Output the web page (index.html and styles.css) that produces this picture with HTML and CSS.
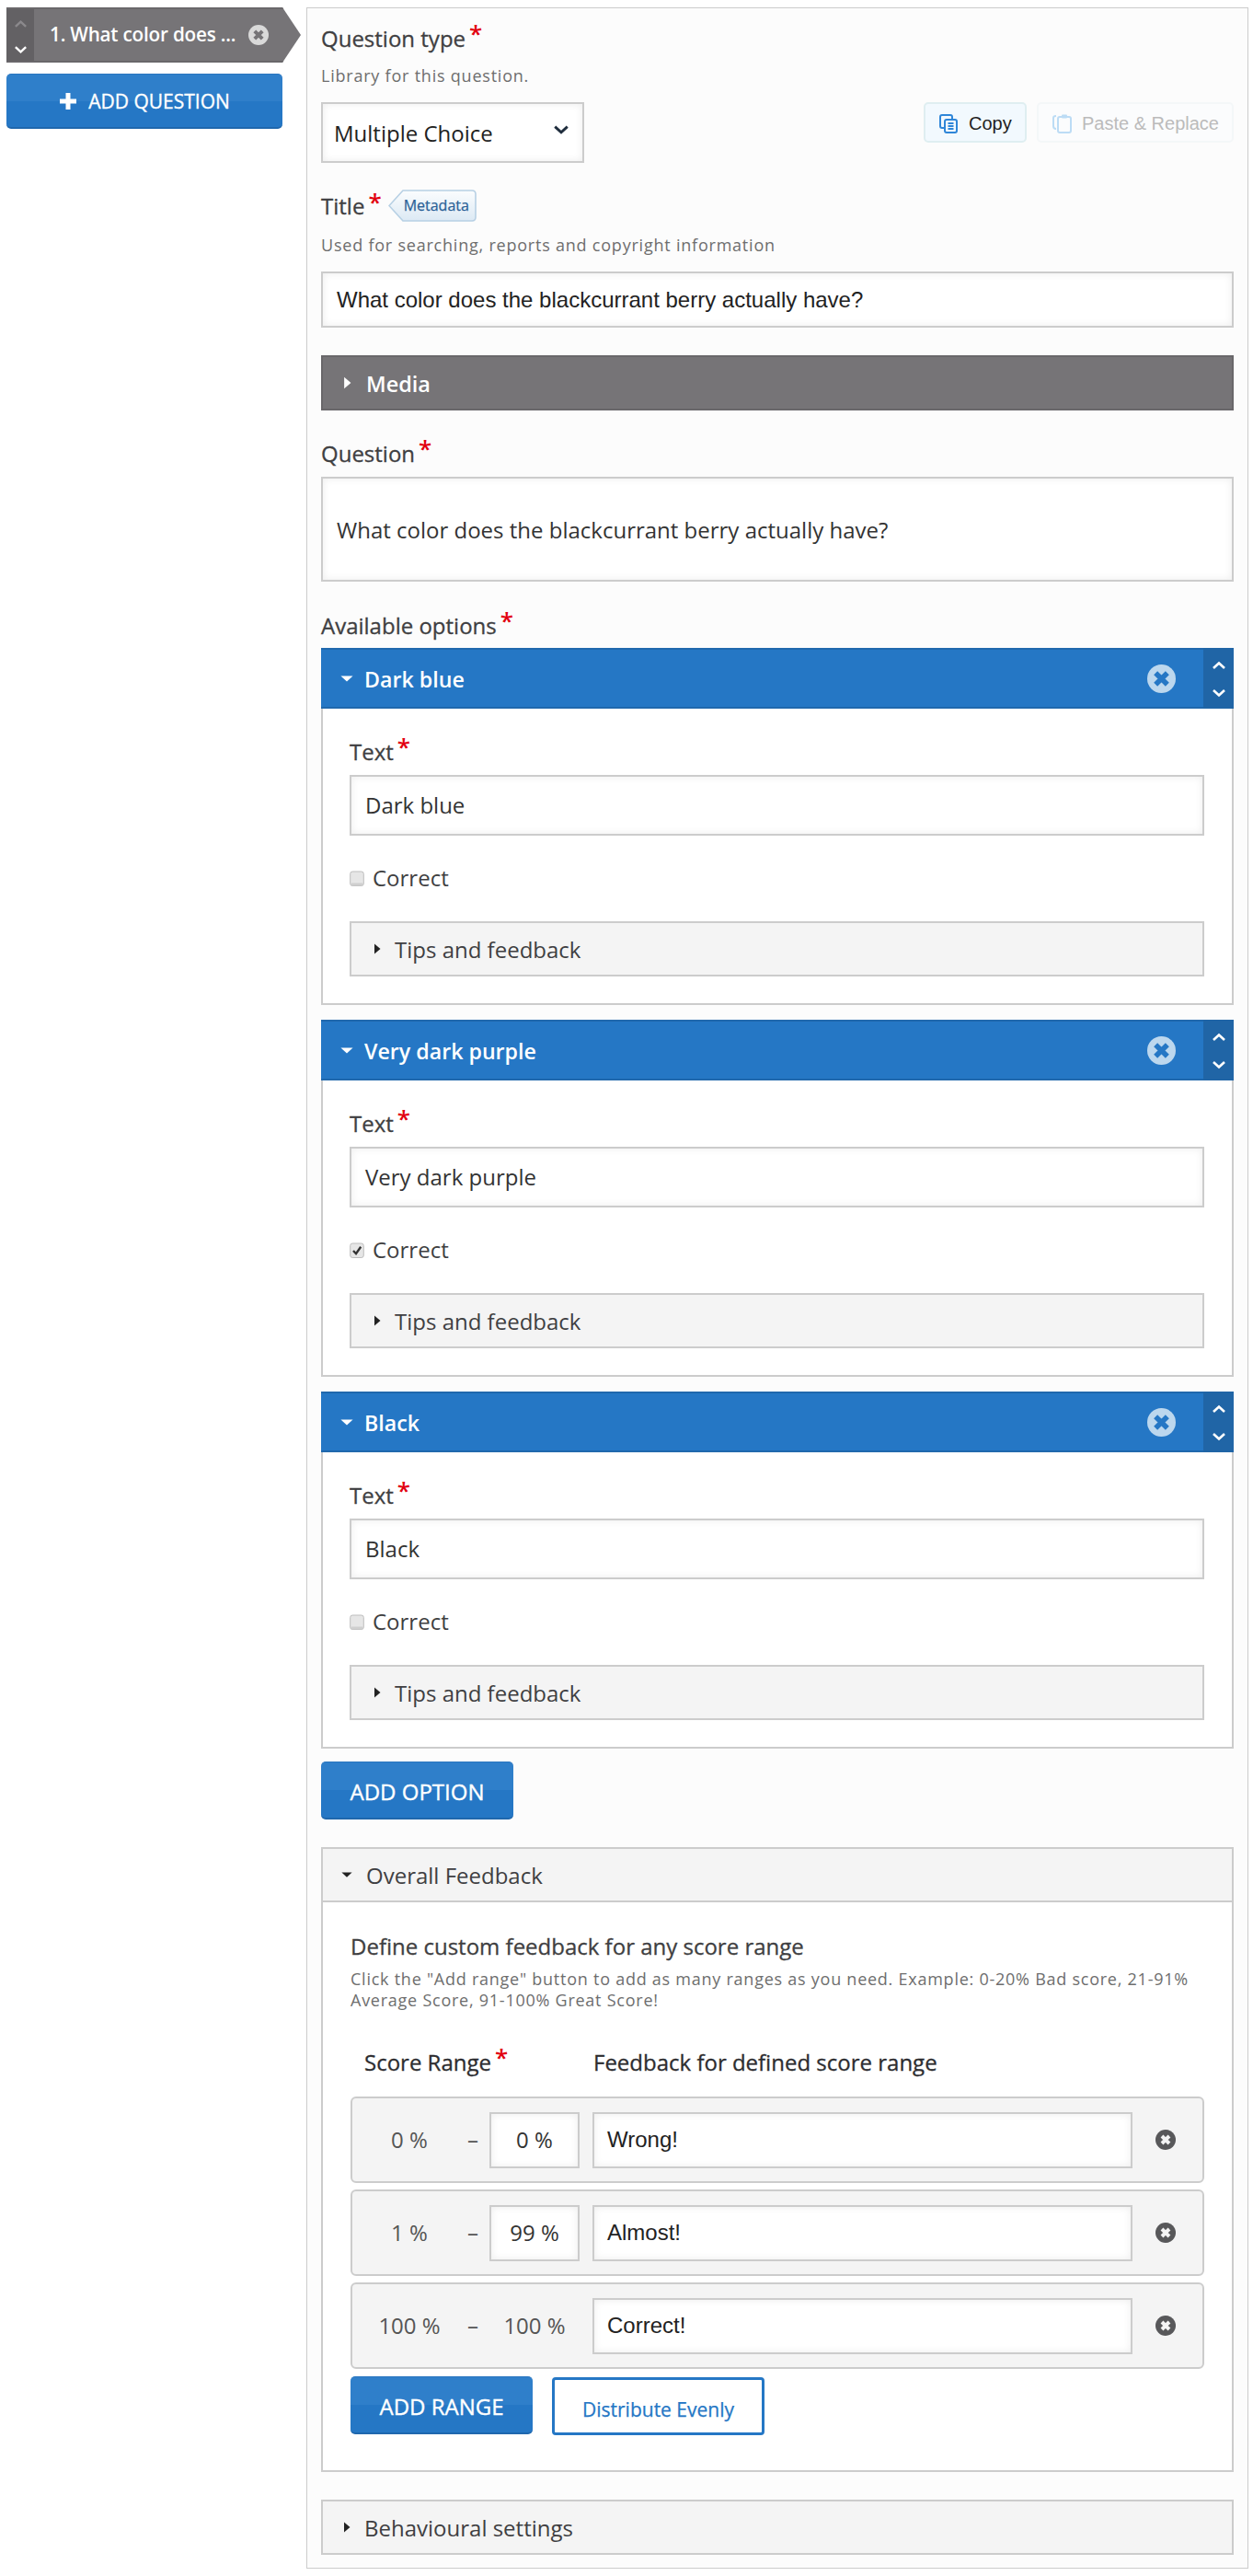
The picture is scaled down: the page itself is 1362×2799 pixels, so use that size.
FILE: index.html
```html
<!DOCTYPE html>
<html lang="en">
<head>
<meta charset="utf-8">
<title>Multiple Choice editor</title>
<link rel="stylesheet" href="styles.css">
</head>
<body>
<svg class="defs" width="0" height="0" aria-hidden="true">
  <symbol id="up" viewBox="0 0 16 10"><path d="M2 8 L8 2.5 L14 8" fill="none" stroke="currentColor" stroke-width="2.6"/></symbol>
  <symbol id="down" viewBox="0 0 16 10"><path d="M2 2 L8 7.5 L14 2" fill="none" stroke="currentColor" stroke-width="2.6"/></symbol>
  <symbol id="right" viewBox="0 0 8 12"><path d="M1 0.5 L7.5 6 L1 11.5 Z" fill="currentColor"/></symbol>
  <symbol id="caret" viewBox="0 0 16 8"><path d="M0.5 0.5 H15.5 L8 7.5 Z" fill="currentColor"/></symbol>
  <symbol id="check" viewBox="0 0 16 18"><rect x="0.7" y="1" width="14.6" height="15.5" rx="2.5" fill="#e6e6e6" stroke="#bdbdbd"/><rect x="1.5" y="13.5" width="13" height="3" rx="1" fill="#cfcfcf"/></symbol>
  <symbol id="checked" viewBox="0 0 16 18"><rect x="0.7" y="1" width="14.6" height="15.5" rx="2.5" fill="#e6e6e6" stroke="#bdbdbd"/><path d="M4 9 L7 12.2 L12.2 4.8" fill="none" stroke="#333" stroke-width="2.4"/></symbol>
</svg>
<div class="layout">
  <aside class="side">
    <div class="nav-item">
      <div class="nav-order">
        <svg class="nav-up"><use href="#up"/></svg>
        <svg class="nav-down"><use href="#down"/></svg>
      </div>
      <span class="nav-text">1. What color does ...</span>
      <svg class="x-icon x-nav" viewBox="0 0 22 22"><circle cx="11" cy="11" r="11"/><path d="M6.8 6.8 L15.2 15.2 M15.2 6.8 L6.8 15.2"/></svg>
    </div>
    <div class="btn btn-wide">
      <svg class="plus" viewBox="0 0 20 20"><path d="M7.5 1 H12.5 V7.5 H19 V12.5 H12.5 V19 H7.5 V12.5 H1 V7.5 H7.5 Z" fill="#fff"/></svg>
      ADD QUESTION
    </div>
  </aside>

  <main class="panel">
    <div class="label l-first">Question type<span class="req">*</span></div>
    <div class="desc d-first">Library for this question.</div>
    <div class="type-row">
      <div class="box select">
        <span>Multiple Choice</span>
        <svg class="sel-arrow"><use href="#down"/></svg>
      </div>
      <div class="copy-tools">
        <div class="tool tool-copy">
          <svg class="tool-icon" viewBox="0 0 22 22" fill="none" stroke="#2f86d8" stroke-width="2"><path d="M6 16 H4 Q2 16 2 14 V4 Q2 2 4 2 H13 Q15 2 15 4 V6"/><rect x="7" y="7" width="13" height="14" rx="2" fill="#f2f9fe"/><path d="M10.5 11 H16.5 M10.5 14 H16.5 M10.5 17 H16.5"/></svg>
          Copy
        </div>
        <div class="tool tool-paste">
          <svg class="tool-icon" viewBox="0 0 22 22" fill="none" stroke="#bcdcf5" stroke-width="2"><path d="M5 17 Q2 17 2 14 V5 Q2 3 5 3"/><rect x="7" y="4" width="14" height="17" rx="2"/><rect x="11" y="1.5" width="6" height="4" rx="1" fill="#bcdcf5" stroke="none"/></svg>
          Paste &amp; Replace
        </div>
      </div>
    </div>

    <div class="label l-title">Title<span class="req">*</span>
      <span class="tag">
        <svg class="tag-bg" viewBox="0 0 96 35" preserveAspectRatio="none"><defs><linearGradient id="tg" x1="0" y1="0" x2="0" y2="1"><stop offset="0" stop-color="#fbfdfe"/><stop offset="1" stop-color="#dce9f4"/></linearGradient></defs><path d="M16 1 H91 Q95 1 95 5 V30 Q95 34 91 34 H16 L1 17.5 Z" fill="url(#tg)" stroke="#b7d0e4" stroke-width="1.6"/></svg>
        <span class="tag-text">Metadata</span>
      </span>
    </div>
    <div class="desc d-title">Used for searching, reports and copyright information</div>
    <div class="box input-title">What color does the blackcurrant berry actually have?</div>

    <div class="media-bar"><svg class="tri"><use href="#right"/></svg><span class="bar-text">Media</span></div>

    <div class="label l-question">Question<span class="req">*</span></div>
    <div class="box textarea">What color does the blackcurrant berry actually have?</div>

    <div class="label l-options">Available options<span class="req">*</span></div>

    <section class="option">
      <header class="opt-head">
        <svg class="caret"><use href="#caret"/></svg>
        <span class="opt-title">Dark blue</span>
        <svg class="x-icon x-opt" viewBox="0 0 22 22"><circle cx="11" cy="11" r="11"/><path d="M6.5 6.5 L15.5 15.5 M15.5 6.5 L6.5 15.5"/></svg>
        <div class="opt-order"><svg><use href="#up"/></svg><svg><use href="#down"/></svg></div>
      </header>
      <div class="opt-body">
        <div class="label">Text<span class="req">*</span></div>
        <div class="box input-opt">Dark blue</div>
        <div class="correct"><svg class="cb"><use href="#check"/></svg>Correct</div>
        <div class="tips"><svg class="tri-dark"><use href="#right"/></svg>Tips and feedback</div>
      </div>
    </section>

    <section class="option">
      <header class="opt-head">
        <svg class="caret"><use href="#caret"/></svg>
        <span class="opt-title">Very dark purple</span>
        <svg class="x-icon x-opt" viewBox="0 0 22 22"><circle cx="11" cy="11" r="11"/><path d="M6.5 6.5 L15.5 15.5 M15.5 6.5 L6.5 15.5"/></svg>
        <div class="opt-order"><svg><use href="#up"/></svg><svg><use href="#down"/></svg></div>
      </header>
      <div class="opt-body">
        <div class="label">Text<span class="req">*</span></div>
        <div class="box input-opt">Very dark purple</div>
        <div class="correct"><svg class="cb"><use href="#checked"/></svg>Correct</div>
        <div class="tips"><svg class="tri-dark"><use href="#right"/></svg>Tips and feedback</div>
      </div>
    </section>

    <section class="option">
      <header class="opt-head">
        <svg class="caret"><use href="#caret"/></svg>
        <span class="opt-title">Black</span>
        <svg class="x-icon x-opt" viewBox="0 0 22 22"><circle cx="11" cy="11" r="11"/><path d="M6.5 6.5 L15.5 15.5 M15.5 6.5 L6.5 15.5"/></svg>
        <div class="opt-order"><svg><use href="#up"/></svg><svg><use href="#down"/></svg></div>
      </header>
      <div class="opt-body">
        <div class="label">Text<span class="req">*</span></div>
        <div class="box input-opt">Black</div>
        <div class="correct"><svg class="cb"><use href="#check"/></svg>Correct</div>
        <div class="tips"><svg class="tri-dark"><use href="#right"/></svg>Tips and feedback</div>
      </div>
    </section>

    <div class="btn btn-option">ADD OPTION</div>

    <section class="group">
      <header class="group-head"><svg class="caret-dark"><use href="#caret"/></svg>Overall Feedback</header>
      <div class="group-body">
        <div class="define">Define custom feedback for any score range</div>
        <div class="define-desc">Click the "Add range" button to add as many ranges as you need. Example: 0-20% Bad score, 21-91% Average Score, 91-100% Great Score!</div>
        <div class="score-head">
          <div class="score-col">Score Range<span class="req">*</span></div>
          <div>Feedback for defined score range</div>
        </div>
        <div class="ranges">
          <div class="range">
            <span class="from">0 %</span><span class="dash">–</span>
            <span class="to to-input">0 %</span>
            <span class="fb">Wrong!</span>
            <svg class="x-icon x-range" viewBox="0 0 22 22"><circle cx="11" cy="11" r="11"/><path d="M7 7 L15 15 M15 7 L7 15"/></svg>
          </div>
          <div class="range">
            <span class="from">1 %</span><span class="dash">–</span>
            <span class="to to-input">99 %</span>
            <span class="fb">Almost!</span>
            <svg class="x-icon x-range" viewBox="0 0 22 22"><circle cx="11" cy="11" r="11"/><path d="M7 7 L15 15 M15 7 L7 15"/></svg>
          </div>
          <div class="range">
            <span class="from">100 %</span><span class="dash">–</span>
            <span class="to">100 %</span>
            <span class="fb">Correct!</span>
            <svg class="x-icon x-range" viewBox="0 0 22 22"><circle cx="11" cy="11" r="11"/><path d="M7 7 L15 15 M15 7 L7 15"/></svg>
          </div>
        </div>
        <div class="range-actions">
          <div class="btn btn-range">ADD RANGE</div>
          <div class="btn-outline">Distribute Evenly</div>
        </div>
      </div>
    </section>

    <div class="behaviour"><svg class="tri-dark"><use href="#right"/></svg>Behavioural settings</div>
  </main>
</div>
</body>
</html>
```
FILE: styles.css
```css
* { box-sizing: border-box; }
html, body { margin: 0; padding: 0; background: #fff; }
body { font-family: "Open Sans", "Liberation Sans", sans-serif; color: #3f3f42; height: 2799px; overflow: hidden; }
.defs { position: absolute; }
.layout { display: flex; align-items: flex-start; padding: 8px 5px 0 7px; }

/* sidebar */
.side { width: 326px; flex: none; }
.nav-item { width: 320px; height: 60px; background: #767477; border-top: 2px solid #69676a; border-bottom: 2px solid #69676a; display: flex; align-items: center; clip-path: polygon(0 0, 300px 0, 320px 50%, 300px 100%, 0 100%); color: #fff; }
.nav-order { width: 30px; height: 56px; background: #636164; flex: none; display: flex; flex-direction: column; align-items: center; justify-content: space-between; padding: 11px 0 7px; }
.nav-order svg { width: 15px; height: 10px; }
.nav-up { color: #8b898c; }
.nav-down { color: #fff; }
.nav-text { margin-left: 17px; font-size: 20.7px; font-weight: 600; letter-spacing: -0.2px; white-space: nowrap; width: 216px; margin-top: -3px; }
.x-icon { display: block; flex: none; width: 22px; height: 22px; }
.x-icon path { fill: none; stroke-width: 4; stroke-linecap: butt; }
.x-nav circle { fill: #d9d9d9; }
.x-nav path { stroke: #767477; }

.btn { background: linear-gradient(#2f7fca 0, #2f7fca 50%, #2577c5 50%, #2577c5 100%); color: #fff; border-radius: 5px; border-bottom: 2px solid #1f67ad; border-top: 1px solid #2a76c0; display: flex; align-items: center; justify-content: center; font-size: 24px; -webkit-text-stroke: 0.35px #fff; padding-top: 2px; }
.btn-wide { width: 300px; height: 60px; margin-top: 12px; gap: 12px; font-size: 21px; padding-top: 0; }
.plus { width: 20px; height: 20px; }

/* panel */
.panel { width: 1024px; height: 2783px; flex: none; background: #fcfcfc; border: 1px solid #ccc; padding: 21px 15px 0; }
.label { font-size: 24px; line-height: 24px; color: #3f3f42; -webkit-text-stroke: 0.3px #3f3f42; }
.req { color: #e2000f; font-size: 26px; line-height: 0; margin-left: 4px; position: relative; top: -5px; font-weight: 600; -webkit-text-stroke: 0; }
.desc { font-size: 18px; line-height: 20px; color: #6e6e6e; letter-spacing: 0.78px; }
.d-first { margin-top: 18px; }
.type-row { margin-top: 19px; display: flex; justify-content: space-between; align-items: flex-start; }
.box { background: #fff; border: 2px solid #ccc; box-shadow: inset 0 0 8px rgba(0,0,0,.08); display: flex; align-items: center; font-size: 24px; color: #222; }
.select { width: 286px; height: 66px; padding: 0 14px 0 12px; justify-content: space-between; }
.sel-arrow { width: 18px; height: 12px; color: #1f2d3d; margin-top: -6px; }
.copy-tools { display: flex; gap: 11px; }
.tool { height: 44px; border-radius: 5px; display: flex; align-items: center; font-family: "Liberation Sans", Arial, sans-serif; font-size: 20px; border: 2px solid; padding-left: 14px; padding-top: 2px; gap: 11px; }
.tool-icon { width: 22px; height: 22px; flex: none; }
.tool-copy { width: 112px; background: #f2f9fe; border-color: #dfeef1; color: #222; }
.tool-paste { width: 214px; background: #fbfcfd; border-color: #f4f7f8; color: #bbb; }

.l-title { margin-top: 35px; display: flex; align-items: center; height: 24px; }
.tag { position: relative; width: 96px; height: 35px; margin-left: 7px; margin-top: -1px; display: block; -webkit-text-stroke: 0; }
.tag-bg { position: absolute; inset: 0; width: 100%; height: 100%; }
.tag-text { position: absolute; left: 17px; top: 0; line-height: 35px; font-size: 16px; color: #2b6297; -webkit-text-stroke: 0.25px #2b6297; }
.d-title { margin-top: 20px; }
.input-title { margin-top: 19px; height: 61px; padding-left: 15px; font-family: "Liberation Sans", Arial, sans-serif; }

.media-bar { margin-top: 30px; height: 60px; background: #767477; border: 2px solid #69676a; color: #fff; font-size: 23.5px; font-weight: 600; display: flex; align-items: center; padding-left: 22px; }
.bar-text { margin-top: 2px; }
.tri { width: 9px; height: 14px; margin-right: 16px; flex: none; color: #fff; }
.l-question { margin-top: 35px; }
.textarea { margin-top: 13px; height: 114px; padding-left: 15px; color: #333; }
.l-options { margin-top: 36px; }

/* options */
.option { margin-top: 12px; }
.option + .option { margin-top: 16px; }
.opt-head { height: 66px; background: #2577c5; border-top: 2px solid #2068ad; border-bottom: 2px solid #2068ad; display: flex; align-items: center; color: #fff; position: relative; }
.caret { width: 14px; height: 7px; margin-left: 21px; color: #fff; flex: none; }
.opt-title { margin-left: 12px; margin-top: 2px; font-size: 23.2px; font-weight: 600; flex: 1; }
.x-opt { width: 31px; height: 31px; margin-right: 30px; }
.x-opt circle { fill: #bcd7ee; }
.x-opt path { stroke: #2577c5; }
.opt-order { width: 33px; height: 66px; margin: -2px 0; background: #2065a6; display: flex; flex-direction: column; align-items: center; justify-content: space-between; padding: 14px 0 12px; }
.opt-order svg { width: 16px; height: 10px; }
.opt-body { background: #fff; border: 2px solid #ccc; border-top: 0; padding: 35px 30px 29px 29px; height: 322px; }
.input-opt { margin-top: 13px; height: 66px; padding: 0 0 2px 15px; color: #333; }
.correct { margin-top: 34px; font-size: 24px; line-height: 24px; display: flex; align-items: center; gap: 9px; color: #3f3f42; }
.cb { width: 16px; height: 18px; flex: none; margin-top: 1px; }
.tips { margin-top: 35px; height: 60px; background: #f4f4f4; border: 2px solid #ccc; display: flex; align-items: center; padding-left: 24px; font-size: 24px; color: #3f3f42; }
.tri-dark { width: 8px; height: 12px; color: #222; margin-right: 15px; flex: none; }

.btn-option { margin-top: 14px; width: 209px; height: 63px; }

/* overall feedback */
.group { margin-top: 30px; }
.group-head { height: 60px; background: #f4f4f4; border: 2px solid #ccc; display: flex; align-items: center; padding-left: 20px; font-size: 24px; color: #3f3f42; }
.caret-dark { width: 12px; height: 6px; color: #222; margin-right: 15px; flex: none; }
.group-body { background: #fff; border: 2px solid #ccc; border-top: 0; padding: 36px 30px 0; height: 619px; }
.define { font-size: 24px; line-height: 24px; color: #3f3f42; -webkit-text-stroke: 0.3px #3f3f42; }
.define-desc { margin-top: 12px; font-size: 18px; line-height: 22.5px; letter-spacing: 0.75px; color: #6e6e6e; }
.score-head { margin-top: 45px; display: flex; padding-left: 15px; font-size: 24px; line-height: 24px; color: #2d2d30; -webkit-text-stroke: 0.3px #2d2d30; }
.score-col { width: 249px; }
.ranges { margin-top: 25px; display: flex; flex-direction: column; gap: 7px; }
.range { height: 94px; background: #f4f4f4; border: 2px solid #ccc; border-radius: 6px; display: flex; align-items: center; font-size: 24px; color: #555; }
.from { width: 124px; text-align: center; padding-bottom: 2px; }
.dash { width: 14px; text-align: center; margin-right: 11px; padding-bottom: 2px; }
.to { width: 98px; height: 61px; display: flex; align-items: center; justify-content: center; color: #555; padding-bottom: 2px; }
.to-input { background: #fff; border: 2px solid #ccc; box-shadow: inset 0 0 8px rgba(0,0,0,.08); color: #333; }
.fb { margin-left: 14px; width: 587px; height: 61px; background: #fff; border: 2px solid #ccc; box-shadow: inset 0 0 8px rgba(0,0,0,.08); display: flex; align-items: center; padding-left: 14px; font-family: "Liberation Sans", Arial, sans-serif; color: #222; }
.x-range { margin-left: 25px; }
.x-range circle { fill: #58585a; }
.x-range path { stroke: #f4f4f4; }
.range-actions { margin-top: 8px; display: flex; align-items: flex-start; gap: 21px; }
.btn-range { width: 198px; height: 63px; }
.btn-outline { margin-top: 1px; width: 231px; height: 63px; background: #fff; border: 3px solid #2577c5; border-radius: 4px; color: #2577c5; display: flex; align-items: center; justify-content: center; font-size: 21px; -webkit-text-stroke: 0.25px #2577c5; padding-top: 7px; }
.behaviour { margin-top: 30px; height: 60px; background: #f4f4f4; border: 2px solid #ccc; display: flex; align-items: center; padding-left: 22px; font-size: 24px; color: #3f3f42; }
```
